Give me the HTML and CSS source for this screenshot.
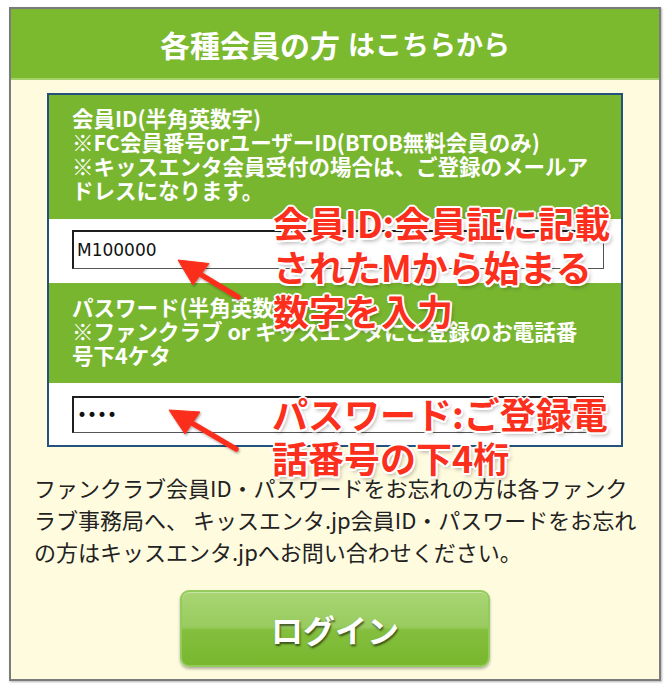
FILE: index.html
```html
<!DOCTYPE html>
<html lang="ja">
<head>
<meta charset="utf-8">
<title>各種会員の方 はこちらから</title>
<link rel="stylesheet" href="styles.css">
</head>
<body>
<div class="frame">
  <div class="head"><span class="t1">各種会員の方</span><span class="t2">はこちらから</span></div>
  <div class="form">
    <div class="label l1">会員ID(半角英数字)<br>※FC会員番号orユーザーID(BTOB無料会員のみ)<br>※キッスエンタ会員受付の場合は、ご登録のメールア<br>ドレスになります。</div>
    <div class="field f1"><input class="inp i1" type="text" value="M100000"></div>
    <div class="label l2">パスワード(半角英数字)<br>※ファンクラブ or キッスエンタにご登録のお電話番<br>号下4ケタ</div>
    <div class="field f2"><input class="inp i2" type="password" value="1234"></div>
  </div>
  <p class="note">ファンクラブ会員ID・パスワードをお忘れの方は各ファンク<br>ラブ事務局へ、 キッスエンタ.jp会員ID・パスワードをお忘れ<br>の方はキッスエンタ.jpへお問い合わせください。</p>
  <div class="btnwrap"><button class="login" type="button">ログイン</button></div>
</div>
<svg class="arrows" width="670" height="690" viewBox="0 0 670 690">
  <defs>
    <filter id="sh" x="-20%" y="-20%" width="140%" height="140%">
      <feDropShadow dx="1" dy="1.5" stdDeviation="1.2" flood-color="#000" flood-opacity="0.35"/>
    </filter>
  </defs>
  <g filter="url(#sh)" fill="#fb2f1c" stroke="#fb2f1c">
    <line x1="238" y1="297" x2="199" y2="273.5" stroke-width="5.5" stroke-linecap="round"/>
    <polygon points="178,260 209,263.5 193,285" stroke-width="1" stroke-linejoin="round"/>
    <line x1="236" y1="449" x2="191" y2="422.5" stroke-width="5.5" stroke-linecap="round"/>
    <polygon points="169,410 200,412 185,434" stroke-width="1" stroke-linejoin="round"/>
  </g>
</svg>
<div class="callout c1">会員ID:会員証に記載<br>されたMから始まる<br>数字を入力</div>
<div class="callout c2">パスワード:ご登録電<br>話番号の下4桁</div>
</body>
</html>
```
FILE: styles.css
```css
html, body {
  margin: 0;
  padding: 0;
  background: #ffffff;
}
body {
  position: relative;
  width: 670px;
  height: 690px;
  overflow: hidden;
  font-family: "Noto Sans CJK JP", "Noto Sans", sans-serif;
}
.frame {
  margin: 7px 0 0 9px;
  width: 648px;
  border: 2px solid #7b7b7b;
  background: #fffbdf;
  box-shadow: 1px 1px 2px rgba(0, 0, 0, 0.3);
  padding-bottom: 12px;
}
.head {
  height: 69px;
  background: #7bb92f;
  border-bottom: 2px solid #a4d268;
  display: flex;
  align-items: center;
  justify-content: center;
  color: #ffffff;
  font-weight: 700;
  gap: 8px;
}
.t1 {
  font-size: 30px;
  line-height: 1;
}
.t2 {
  font-size: 27px;
  line-height: 1;
}
.form {
  margin: 13px 36px 0 36px;
  border: 2px solid #24517e;
}
.label {
  background: #78b630;
  color: #ffffff;
  font-weight: 700;
  font-size: 21.5px;
  line-height: 24px;
  padding-left: 23px;
  white-space: nowrap;
}
.l1 {
  padding-top: 11px;
  padding-bottom: 17px;
}
.l2 {
  padding-top: 12px;
  padding-bottom: 16px;
}
.field {
  background: #ffffff;
  padding-left: 23px;
}
.f1 {
  padding-top: 11px;
  padding-bottom: 14px;
}
.f2 {
  padding-top: 13px;
  padding-bottom: 12px;
}
.inp {
  display: block;
  box-sizing: border-box;
  width: 532px;
  margin: 0;
  padding: 0 3px;
  border-style: solid;
  border-width: 2px 1px 1px 2px;
  border-color: #1e1e1e #555555 #555555 #1e1e1e;
  background: #ffffff;
  font-family: "DejaVu Sans", sans-serif;
  font-size: 17px;
  color: #111111;
  outline: none;
}
.i1 {
  height: 39px;
}
.i2 {
  height: 37px;
}
.note {
  margin: 24px 0 0 0;
  padding-left: 23px;
  font-size: 22px;
  line-height: 32px;
  color: #222222;
  white-space: nowrap;
}
.btnwrap {
  margin-top: 23px;
  display: flex;
  justify-content: center;
}
.login {
  box-sizing: border-box;
  width: 310px;
  height: 77px;
  border: 2px solid #93cb5c;
  border-radius: 9px;
  background: linear-gradient(to bottom, #a9d573 0%, #98cb5f 48%, #84bf3d 52%, #79b72f 100%);
  box-shadow: 0 2px 3px rgba(0, 0, 0, 0.3), inset 0 1px 0 rgba(255, 255, 255, 0.35);
  color: #ffffff;
  font-family: "Noto Sans CJK JP", "Noto Sans", sans-serif;
  font-weight: 700;
  font-size: 32px;
  text-shadow: 1px 2px 2px rgba(0, 0, 0, 0.55);
  padding: 0;
}
.arrows {
  position: absolute;
  left: 0;
  top: 0;
  pointer-events: none;
}
.callout {
  position: absolute;
  color: #fb2f1c;
  font-weight: 700;
  font-size: 36px;
  line-height: 44px;
  white-space: nowrap;
  text-shadow:
    2px 0 0 #fff, -2px 0 0 #fff, 0 2px 0 #fff, 0 -2px 0 #fff,
    1.5px 1.5px 0 #fff, -1.5px -1.5px 0 #fff, 1.5px -1.5px 0 #fff, -1.5px 1.5px 0 #fff,
    2px 3px 4px rgba(0, 0, 0, 0.35);
}
.c1 {
  left: 273px;
  top: 200px;
}
.c2 {
  left: 272px;
  top: 391px;
}
```
